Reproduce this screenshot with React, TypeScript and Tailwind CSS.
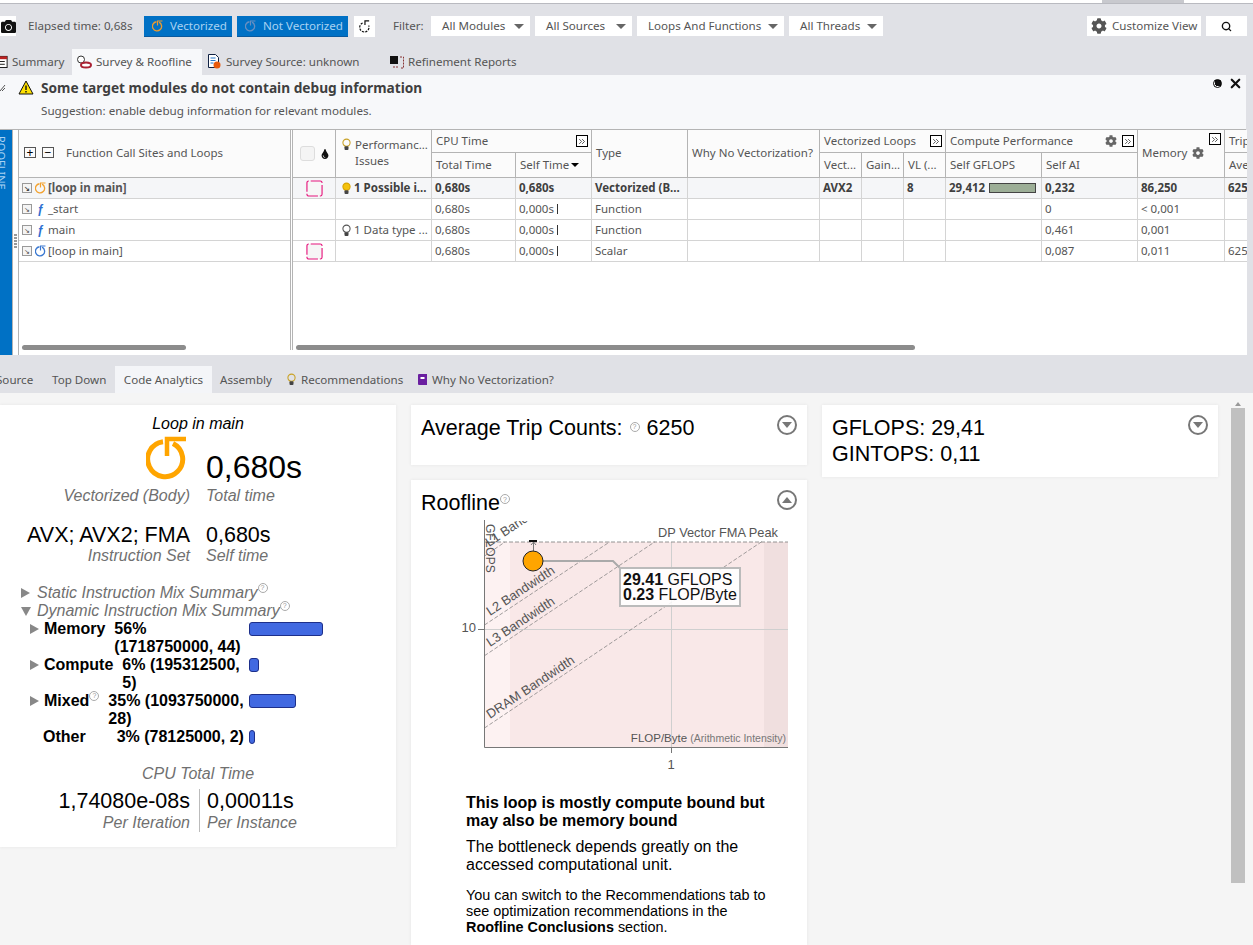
import { ChevronsRight, Search, X } from "lucide-react";
import { FaCamera, FaCog, FaTint } from "react-icons/fa";
import type { ReactNode } from "react";

const ui = "[font-family:'Noto_Sans',sans-serif]";
const arial = "[font-family:'Liberation_Sans',Arial,sans-serif]";
const cols =
  "grid grid-cols-[43px_96px_84px_76px_96px_132px_42px_42px_42px_96px_96px_87px_22px]";

function LoopIcon({ color, className }: { color: string; className: string }) {
  return (
    <svg viewBox="0 0 42 44" className={className} fill="none">
      <path d="M27 7.5A17.5 17.5 0 1 1 17 5.8" stroke={color} strokeWidth="5" />
      <path d="M40 3H21V20" stroke={color} strokeWidth="4.5" />
    </svg>
  );
}

function Bulb({ fill = "none", stroke = "#c9a227" }: { fill?: string; stroke?: string }) {
  return (
    <svg viewBox="0 0 10 14" className="h-[13px] w-[9px] shrink-0">
      <circle cx="5" cy="5" r="4" fill={fill} stroke={stroke} strokeWidth="1.2" />
      <rect x="2.8" y="9" width="4.4" height="4" rx="1" fill="#444" />
    </svg>
  );
}

function Help({ className = "" }: { className?: string }) {
  return (
    <span
      className={`inline-flex h-[10px] w-[10px] items-center justify-center rounded-full border border-[#aaa] text-[7px] leading-none font-normal not-italic text-[#999] ${className}`}
    >
      ?
    </span>
  );
}

function Expand() {
  return (
    <span className="flex h-[12px] w-[12px] items-center justify-center border border-black bg-white">
      <ChevronsRight size={11} strokeWidth={1.8} color="#222" />
    </span>
  );
}

function Drop({ label, className }: { label: string; className: string }) {
  return (
    <div className={`flex h-[20px] items-center justify-between bg-white pr-[6px] pl-[11px] ${className}`}>
      <span>{label}</span>
      <span className="h-0 w-0 border-x-[5px] border-t-[5px] border-x-transparent border-t-[#666]" />
    </div>
  );
}

function Toolbar() {
  return (
    <div className="flex h-[45px] items-start pt-[12px] text-[11.6px] text-[#555]">
      <div className="flex h-[20px] w-[16px] items-center justify-end overflow-hidden bg-white">
        <FaCamera size={15} color="#111" className="shrink-0" />
      </div>
      <span className="ml-[12px] w-[116px] leading-[20px]">Elapsed time: 0,68s</span>
      <div className="flex h-[21px] w-[88px] items-center gap-[7px] border-b border-[#0a5a9e] bg-[#0071c5] pl-[8px] text-[#a9d2f2]">
        <LoopIcon color="#eb9b2e" className="h-[12px] w-[11px]" />
        Vectorized
      </div>
      <div className="ml-[5px] flex h-[21px] w-[111px] items-center gap-[7px] border-b border-[#0a5a9e] bg-[#0071c5] pl-[8px] text-[#a9d2f2]">
        <LoopIcon color="#6a8fc0" className="h-[12px] w-[11px]" />
        Not Vectorized
      </div>
      <div className="ml-[6px] flex h-[21px] w-[21px] items-center justify-center bg-white">
        <svg viewBox="0 0 14 14" className="h-[13px] w-[13px]" fill="none" stroke="#111" strokeWidth="1.3">
          <path d="M5 3.2A5 5 0 1 0 11.5 6" strokeDasharray="2.4 1.2" />
          <path d="M12 1H7.5V5.5" />
        </svg>
      </div>
      <span className="ml-[18px] w-[38px] leading-[20px]">Filter:</span>
      <Drop label="All Modules" className="w-[99px]" />
      <Drop label="All Sources" className="ml-[5px] w-[97px]" />
      <Drop label="Loops And Functions" className="ml-[5px] w-[147px]" />
      <Drop label="All Threads" className="ml-[5px] w-[94px]" />
      <div className="ml-[204px] flex h-[20px] w-[114px] items-center gap-[5px] bg-white pl-[4px]">
        <FaCog size={16} color="#555" />
        Customize View
      </div>
      <div className="ml-[5px] flex h-[20px] w-[41px] items-center justify-center bg-white">
        <Search size={11} color="#111" strokeWidth={3} />
      </div>
    </div>
  );
}

function TopTabs() {
  return (
    <div className="flex h-[26px] items-center text-[11.6px] text-[#555]">
      <div className="-ml-[4px] flex w-[76px] items-center gap-[4px]">
        <svg viewBox="0 0 12 14" className="h-[13px] w-[12px]">
          <rect x="0.5" y="1.5" width="11" height="12" fill="#fff" stroke="#111" />
          <rect x="0.5" y="1.5" width="11" height="3" fill="#b22" />
          <path d="M3 7h6M3 10h6" stroke="#111" />
        </svg>
        Summary
      </div>
      <div className="flex h-[26px] w-[130px] items-center gap-[4px] bg-[#f7f8fa] pl-[4px]">
        <svg viewBox="0 0 16 14" className="h-[14px] w-[16px]">
          <circle cx="5" cy="4.5" r="3.5" fill="#fff" stroke="#333" />
          <ellipse cx="10" cy="10" rx="5" ry="2.5" fill="#fff" stroke="#a23" strokeWidth="2" />
        </svg>
        Survey &amp; Roofline
      </div>
      <div className="ml-[6px] flex w-[182px] items-center gap-[5px]">
        <svg viewBox="0 0 13 15" className="h-[15px] w-[13px]">
          <path d="M.5.5h7l3 3v10H.5z" fill="#fff" stroke="#124" />
          <path d="M2.5 4h5M2.5 6.5h5M2.5 9h3" stroke="#27c" />
          <circle cx="9" cy="11" r="3.5" fill="#e8590c" />
        </svg>
        Survey Source: unknown
      </div>
      <div className="flex items-center gap-[4px]">
        <svg viewBox="0 0 14 14" className="h-[14px] w-[14px]">
          <rect x="0" y="1" width="8" height="8" fill="#111" />
          <path d="M10 2h3.5v11H10M3 12h5" fill="none" stroke="#833" strokeDasharray="2 1" />
        </svg>
        Refinement Reports
      </div>
    </div>
  );
}

function Notice() {
  return (
    <div className="flex h-[54px] bg-[#f7f8fa] text-[#444]">
      <svg viewBox="0 0 6 8" className="mt-[9px] h-[8px] w-[6px] shrink-0">
        <path d="M0 7 5 1M2 7l3-3" stroke="#555" />
      </svg>
      <svg viewBox="0 0 16 15" className="mt-[5px] ml-[12px] h-[15px] w-[16px] shrink-0">
        <path d="M8 1 15 14H1z" fill="#ffe100" stroke="#111" strokeLinejoin="round" />
        <path d="M8 5.5v4.5M8 11v1.5" stroke="#111" strokeWidth="1.4" />
      </svg>
      <div className="ml-[7px] grow">
        <div className="mt-[3px] text-[13.7px] leading-[20px] font-bold text-[#3f3f3f]">
          Some target modules do not contain debug information
        </div>
        <div className="mt-[5px] text-[11.65px] leading-[16px] text-[#555]">
          Suggestion: enable debug information for relevant modules.
        </div>
      </div>
      <div className="mt-[1px] mr-[3px] flex h-[15px] items-center gap-[6px]">
        <span className="h-[9px] w-[9px] rounded-full border border-black bg-[radial-gradient(circle_at_65%_35%,#111_60%,#fff_62%)]" />
        <X size={15} strokeWidth={3.5} color="#111" />
      </div>
    </div>
  );
}

function Cell({ children, className = "" }: { children?: ReactNode; className?: string }) {
  return (
    <div className={`flex items-center overflow-hidden border-r border-[#d4d4d4] pl-[3px] whitespace-nowrap ${className}`}>
      {children}
    </div>
  );
}

function Head({ children, className = "" }: { children?: ReactNode; className?: string }) {
  return (
    <div className={`relative flex items-center overflow-hidden border-r border-[#b4b4b4] pl-[4px] whitespace-nowrap ${className}`}>
      {children}
    </div>
  );
}

function Marked() {
  return (
    <svg viewBox="0 0 18 18" className="h-[17px] w-[17px]">
      <rect x="1" y="1" width="16" height="16" rx="2" fill="#f6f6f6" stroke="#e6147c" strokeWidth="1.2" strokeDasharray="13 2" strokeDashoffset="-2" />
    </svg>
  );
}

function Micro({ children }: { children: ReactNode }) {
  return <span className="flex items-center gap-[2px]">{children}<span className="ml-[1px] h-[10px] w-px bg-[#333]" /></span>;
}

const treeRows = [
  { kind: "loop", color: "#f2a12e", name: "[loop in main]", bold: true },
  { kind: "fn", name: "_start" },
  { kind: "fn", name: "main" },
  { kind: "loop", color: "#3a78d0", name: "[loop in main]" },
];

function Tree() {
  return (
    <div className="flex w-[272px] shrink-0 flex-col border-r border-[#b4b4b4] bg-white">
      <div className="flex h-[48px] items-center border-b border-[#b4b4b4] bg-[#fbfbfb] pb-[2px] pl-[5px] text-[11.5px] text-[#555]">
        <span className="flex h-[11px] w-[12px] items-center justify-center border border-[#555] text-[12px] leading-none text-black">+</span>
        <span className="ml-[6px] flex h-[11px] w-[12px] items-center justify-center border border-[#555] text-[12px] leading-none text-black">−</span>
        <span className="ml-[12px]">Function Call Sites and Loops</span>
      </div>
      {treeRows.map((row, index) => (
        <div
          key={index}
          className={`flex h-[21px] items-center border-b border-[#d4d4d4] pl-[3px] text-[11.5px] text-[#555] ${row.bold ? "bg-[#f5f6f8] font-bold text-[#3f3f3f]" : ""}`}
        >
          <span className="flex h-[10px] w-[10px] items-center justify-center border border-[#999] bg-[#f4f4f4] text-[7px] leading-none text-[#444]">↘</span>
          <span className="ml-[1px] flex w-[15px] justify-center">
            {row.kind === "loop" ? (
              <LoopIcon color={row.color as string} className="h-[12px] w-[11px]" />
            ) : (
              <span className="text-[12px] leading-none font-bold text-[#2f6fd0] [font-family:'Liberation_Sans',sans-serif]">ƒ</span>
            )}
          </span>
          <span>{row.name}</span>
        </div>
      ))}
    </div>
  );
}

function GridHeader() {
  return (
    <div className={`${cols} h-[48px] grid-rows-[23px_24px] border-b border-[#b4b4b4] bg-[#fbfbfb]`}>
      <Head className="row-span-2 !pl-[7px]">
        <span className="h-[15px] w-[15px] rounded-[3px] border border-[#ddd] bg-[#f4f4f4]" />
        <FaTint size={10} color="#111" className="ml-[5px]" />
      </Head>
      <Head className="row-span-2 items-start !pl-[6px]">
        <div className="mt-[3px] flex flex-col">
          <div className="flex h-[23px] items-center gap-[4px]"><Bulb />Performanc...</div>
          <div className="ml-[13px] leading-[10px]">Issues</div>
        </div>
      </Head>
      <Head className="col-span-2 justify-between border-b pr-[3px]">CPU Time<Expand /></Head>
      <Head className="row-span-2 pb-[2px]">Type</Head>
      <Head className="row-span-2 pb-[2px]">Why No Vectorization?</Head>
      <Head className="col-span-3 justify-between border-b pr-[3px]">Vectorized Loops<Expand /></Head>
      <Head className="col-span-2 justify-between border-b pr-[3px]">
        Compute Performance
        <span className="flex items-center gap-[5px]"><FaCog size={12} color="#666" /><Expand /></span>
      </Head>
      <Head className="row-span-2 gap-[5px] pb-[2px]">
        Memory <FaCog size={12} color="#666" />
        <span className="absolute top-[3px] right-[3px]"><Expand /></span>
      </Head>
      <div className="border-b border-[#b4b4b4] pl-[4px] leading-[22px]">Trip</div>
      <Head>Total Time</Head>
      <Head>
        Self Time
        <span className="ml-[2px] h-0 w-0 border-x-[4px] border-t-[4px] border-x-transparent border-t-black" />
      </Head>
      <Head>Vect...</Head>
      <Head>Gain...</Head>
      <Head>VL (...</Head>
      <Head>Self GFLOPS</Head>
      <Head>Self AI</Head>
      <div className="pl-[4px] leading-[24px]">Ave</div>
    </div>
  );
}

function GridRows() {
  return (
    <>
      <div className={`${cols} h-[21px] border-b border-[#d4d4d4] bg-[#f5f6f8] font-bold text-[#3f3f3f]`}>
        <Cell className="justify-center !pl-0"><Marked /></Cell>
        <Cell className="gap-[3px] !pl-[6px]"><Bulb fill="#f4c20d" stroke="#d9a400" />1 Possible i...</Cell>
        <Cell>0,680s</Cell>
        <Cell>0,680s</Cell>
        <Cell>Vectorized (B...</Cell>
        <Cell />
        <Cell>AVX2</Cell>
        <Cell />
        <Cell>8</Cell>
        <Cell className="gap-[4px]">
          29,412
          <span className="h-[10px] w-[47px] border border-[#444] bg-[#9cae97]" />
        </Cell>
        <Cell>0,232</Cell>
        <Cell>86,250</Cell>
        <div className="pl-[3px] leading-[20px]">625</div>
      </div>
      <div className={`${cols} h-[21px] border-b border-[#d4d4d4]`}>
        <Cell />
        <Cell />
        <Cell>0,680s</Cell>
        <Cell><Micro>0,000s</Micro></Cell>
        <Cell>Function</Cell>
        <Cell />
        <Cell />
        <Cell />
        <Cell />
        <Cell />
        <Cell>0</Cell>
        <Cell>&lt; 0,001</Cell>
        <div />
      </div>
      <div className={`${cols} h-[21px] border-b border-[#d4d4d4]`}>
        <Cell />
        <Cell className="gap-[3px] !pl-[6px]"><Bulb stroke="#555" />1 Data type ...</Cell>
        <Cell>0,680s</Cell>
        <Cell><Micro>0,000s</Micro></Cell>
        <Cell>Function</Cell>
        <Cell />
        <Cell />
        <Cell />
        <Cell />
        <Cell />
        <Cell>0,461</Cell>
        <Cell>0,001</Cell>
        <div />
      </div>
      <div className={`${cols} h-[21px] border-b border-[#d4d4d4]`}>
        <Cell className="justify-center !pl-0"><Marked /></Cell>
        <Cell />
        <Cell>0,680s</Cell>
        <Cell><Micro>0,000s</Micro></Cell>
        <Cell>Scalar</Cell>
        <Cell />
        <Cell />
        <Cell />
        <Cell />
        <Cell />
        <Cell>0,087</Cell>
        <Cell>0,011</Cell>
        <div className="pl-[3px] leading-[20px]">625</div>
      </div>
    </>
  );
}

function SurveyPane() {
  return (
    <div className="flex h-[226px] w-[1246px] border-t border-[#b4b4b4] text-[11.5px] text-[#555]">
      <div className="flex w-[12px] shrink-0 justify-center overflow-hidden bg-[#0071c5]">
        <span className="-ml-[10px] pt-[6px] text-[11px] leading-none text-[#a9d2f2] [writing-mode:vertical-rl]">ROOFLINE</span>
      </div>
      <div className="flex w-[6px] shrink-0 flex-col items-center border-l border-[#b4b4b4] bg-white pt-[104px] pr-[1px]">
        <span className="h-[15px] w-[3px] bg-[repeating-linear-gradient(#999_0_2px,#fff_2px_3px)]" />
      </div>
      <div className="flex grow flex-col border-l border-[#b4b4b4]">
        <div className="flex grow overflow-hidden">
          <Tree />
          <div className="w-[1px] shrink-0 bg-white" />
          <div className="grow overflow-hidden border-l border-[#b4b4b4] bg-white">
            <GridHeader />
            <GridRows />
          </div>
        </div>
        <div className="flex h-[10px] items-start bg-white">
          <div className="flex w-[272px] shrink-0 border-r border-[#b4b4b4] pl-[3px]">
            <span className="h-[5px] w-[164px] rounded-full bg-[#8c8c8c]" />
          </div>
          <div className="ml-[1px] border-l border-[#b4b4b4] pl-[3px]">
            <span className="block h-[5px] w-[619px] rounded-full bg-[#8c8c8c]" />
          </div>
        </div>
      </div>
    </div>
  );
}

function LowerTabs() {
  return (
    <div className="mt-[11px] flex h-[27px] items-center text-[11.6px] text-[#555]">
      <span className="-ml-[4px] w-[56px]">Source</span>
      <span className="w-[63px]">Top Down</span>
      <span className="flex h-[27px] w-[97px] items-center justify-center bg-[#f4f5f8]">Code Analytics</span>
      <span className="ml-[8px] w-[67px]">Assembly</span>
      <span className="flex w-[131px] items-center gap-[5px]"><Bulb />Recommendations</span>
      <span className="flex items-center gap-[5px]">
        <svg viewBox="0 0 9 11" className="h-[11px] w-[9px]">
          <path d="M1 0h8v11H1a1 1 0 0 1-1-1V1a1 1 0 0 1 1-1z" fill="#6a1fa0" />
          <rect x="2.5" y="3" width="4" height="2" fill="#fff" />
        </svg>
        Why No Vectorization?
      </span>
    </div>
  );
}

const mix = [
  { name: "Memory", value: "56% (1718750000, 44)", bar: "w-[74px]", gap: "ml-[9px]", arrow: true },
  { name: "Compute", value: "6% (195312500, 5)", bar: "w-[10px]", gap: "ml-[9px]", arrow: true },
  { name: "Mixed", value: "35% (1093750000, 28)", bar: "w-[47px]", gap: "ml-[9px]", help: true, arrow: true },
  { name: "Other", value: "3% (78125000, 2)", bar: "w-[6px]", gap: "ml-[31px] whitespace-nowrap", arrow: false },
];

function SummaryCard() {
  return (
    <div className={`h-[442px] w-[396px] shrink-0 bg-white pt-[9px] shadow-[0_0_3px_#e4e4e4] ${arial}`}>
      <div className="text-center text-[16px] leading-[19px] text-black italic">Loop in main</div>
      <div className="mt-[3px] grid grid-cols-[190px_1fr] gap-x-[16px]">
        <div className="flex h-[44px] items-start pl-[146px]">
          <LoopIcon color="#ffa500" className="h-[44px] w-[42px]" />
        </div>
        <div className="mt-[13px] h-[36px] text-[32px] leading-[36px] text-black">0,680s</div>
        <div className="mt-[1px] text-right text-[16px] leading-[19px] text-[#707070] italic">Vectorized (Body)</div>
        <div className="mt-[1px] text-[16px] leading-[19px] text-[#707070] italic">Total time</div>
        <div className="mt-[18px] text-right text-[21.5px] leading-[25px] text-black">AVX; AVX2; FMA</div>
        <div className="mt-[18px] text-[21.5px] leading-[25px] text-black">0,680s</div>
        <div className="-mt-[2px] text-right text-[16px] leading-[19px] text-[#707070] italic">Instruction Set</div>
        <div className="-mt-[2px] text-[16px] leading-[19px] text-[#707070] italic">Self time</div>
      </div>
      <div className="mt-[19px] pl-[21px] text-[16px] leading-[18px] text-[#707070] italic">
        <div className="flex items-center gap-[7px]">
          <span className="h-0 w-0 border-y-[5px] border-l-[9px] border-y-transparent border-l-[#888]" />
          <span>Static Instruction Mix Summary<Help className="relative -top-[8px]" /></span>
        </div>
        <div className="flex items-center gap-[6px]">
          <span className="h-0 w-0 border-x-[5px] border-t-[9px] border-x-transparent border-t-[#888]" />
          <span>Dynamic Instruction Mix Summary<Help className="relative -top-[8px]" /></span>
        </div>
      </div>
      <div className="pl-[30px] text-[16px] leading-[18px] font-bold text-black">
        {mix.map((row) => (
          <div key={row.name} className="flex items-start">
            <span className="w-[14px] shrink-0 pt-[4px]">
              {row.arrow && <span className="block h-0 w-0 border-y-[5px] border-l-[9px] border-y-transparent border-l-[#888]" />}
            </span>
            <span className={`shrink-0 ${row.arrow ? "" : "-ml-px"}`}>
              {row.name}
              {row.help && <Help className="relative -top-[8px]" />}
            </span>
            <span className={`${row.gap} grow`}>{row.value}</span>
            <span className="mt-[2px] mr-[73px] ml-[4px] flex w-[74px] shrink-0">
              <span className={`h-[14px] ${row.bar} rounded-[3px] border border-[#1d2f8a] bg-[#4169e1]`} />
            </span>
          </div>
        ))}
      </div>
      <div className="mt-[18px] text-center text-[16px] leading-[19px] text-[#707070] italic">CPU Total Time</div>
      <div className="mt-[6px] flex">
        <div className="w-[199px] pr-[9px] text-right">
          <div className="text-[21.5px] leading-[25px] text-black">1,74080e-08s</div>
          <div className="-mt-[1px] text-[16px] leading-[19px] text-[#707070] italic">Per Iteration</div>
        </div>
        <div className="border-l border-[#bbb] pl-[7px]">
          <div className="text-[21.5px] leading-[25px] text-black">0,00011s</div>
          <div className="-mt-[1px] text-[16px] leading-[19px] text-[#707070] italic">Per Instance</div>
        </div>
      </div>
    </div>
  );
}

function Toggle({ up = false }: { up?: boolean }) {
  return (
    <span className="flex h-[20px] w-[20px] items-center justify-center rounded-full border-2 border-[#777] bg-white">
      <span
        className={`h-0 w-0 border-x-[5px] border-x-transparent ${up ? "border-b-[6px] border-b-[#777]" : "border-t-[6px] border-t-[#777]"}`}
      />
    </span>
  );
}

function RooflineChart() {
  const label = "Liberation Sans, Arial, sans-serif";
  return (
    <svg width="396" height="290" viewBox="411 510 396 290" fontFamily={label} className="block">
      <defs>
        <clipPath id="plot">
          <rect x="485" y="521" width="303" height="226" />
        </clipPath>
      </defs>
      <rect x="485" y="542" width="25" height="205" fill="#fdf2f2" />
      <rect x="510" y="542" width="254" height="205" fill="#f9e8e8" />
      <rect x="764" y="542" width="24" height="205" fill="#f0dfdf" />
      <path d="M671.5 542V747M485 629.5H788" stroke="#cfcfcf" />
      <g clipPath="url(#plot)" stroke="#777" strokeDasharray="4 2" strokeWidth="0.7" fill="none">
        <path d="M485 542H788" stroke="#888" strokeWidth="0.9" />
        <path d="M484.5 556 505 542" />
        <path d="M484.5 625 610 541.7" />
        <path d="M484.5 655.7 655 541.7" />
        <path d="M484.5 728 761.7 541.7" />
      </g>
      <g clipPath="url(#plot)" fontSize="13" fill="#555">
        <text transform="translate(489 547) rotate(-33.5)">L1 Bandwidth</text>
        <text transform="translate(490 616) rotate(-33.5)">L2 Bandwidth</text>
        <text transform="translate(490 647) rotate(-33.5)">L3 Bandwidth</text>
        <text transform="translate(490 719) rotate(-33.5)">DRAM Bandwidth</text>
      </g>
      <text transform="translate(486 524) rotate(90)" fontSize="12" fill="#555">GFLOPS</text>
      <text x="778" y="537" textAnchor="end" fontSize="12.8" fill="#555">DP Vector FMA Peak</text>
      <text x="786" y="742" textAnchor="end" fontSize="11.5" fill="#555">
        FLOP/Byte <tspan fill="#777" fontSize="10.5">(Arithmetic Intensity)</tspan>
      </text>
      <path d="M484.5 520V747.5H788M478 629.5H485M671.5 747V753" fill="none" stroke="#777" />
      <text x="476" y="632" textAnchor="end" fontSize="13" fill="#555">10</text>
      <text x="671" y="769" textAnchor="middle" fontSize="13" fill="#555">1</text>
      <path d="M533.5 551V542M531 545l2.5-3 2.5 3" fill="none" stroke="#777" />
      <path d="M529 541H537" stroke="#111" strokeWidth="2" />
      <path d="M543 561H613L620 568" fill="none" stroke="#aaa" strokeWidth="2" />
      <circle cx="533" cy="561" r="10" fill="#ffa500" stroke="#222" />
      <rect x="620" y="568" width="120" height="38" fill="#fff" fillOpacity="0.88" stroke="#bbb" strokeWidth="2" />
      <text x="623" y="585" fontSize="16" fill="#111">
        <tspan fontWeight="bold">29.41</tspan> GFLOPS
      </text>
      <text x="623" y="600" fontSize="16" fill="#111">
        <tspan fontWeight="bold">0.23</tspan> FLOP/Byte
      </text>
    </svg>
  );
}

function MiddleColumn() {
  return (
    <div className={`flex w-[396px] shrink-0 flex-col gap-[15px] ${arial}`}>
      <div className="flex h-[60px] justify-between bg-white pt-[10px] pr-[10px] pl-[10px] shadow-[0_0_3px_#e4e4e4]">
        <div className="text-[21.5px] leading-[26px] text-black">
          Average Trip Counts: <Help className="relative -top-[6px] mx-[1px]" /> 6250
        </div>
        <Toggle />
      </div>
      <div className="h-[470px] bg-white shadow-[0_0_3px_#e4e4e4]">
        <div className="flex h-[30px] justify-between pt-[10px] pr-[10px] pl-[10px]">
          <div className="text-[21.5px] leading-[26px] text-black">
            Roofline<Help className="relative -top-[8px]" />
          </div>
          <Toggle up />
        </div>
        <RooflineChart />
        <div className="ml-[55px] w-[310px] text-black">
          <div className="-mt-[6px] text-[16px] leading-[18px] font-bold">
            This loop is mostly compute bound but may also be memory bound
          </div>
          <div className="mt-[8px] text-[16px] leading-[18px]">
            The bottleneck depends greatly on the accessed computational unit.
          </div>
          <div className="mt-[13px] text-[14.4px] leading-[16px]">
            You can switch to the Recommendations tab to see optimization recommendations in the{" "}
            <span className="font-bold">Roofline Conclusions</span> section.
          </div>
        </div>
      </div>
    </div>
  );
}

function MetricsCard() {
  return (
    <div className={`flex h-[72px] w-[396px] shrink-0 justify-between bg-white pt-[10px] pr-[10px] pl-[10px] text-[21.5px] leading-[26px] text-black shadow-[0_0_3px_#e4e4e4] ${arial}`}>
      <div>
        <div>GFLOPS: 29,41</div>
        <div>GINTOPS: 0,11</div>
      </div>
      <Toggle />
    </div>
  );
}

export default function App() {
  return (
    <div className={`h-[945px] w-[1253px] overflow-hidden bg-[#e0e1e6] ${ui}`}>
      <div className="flex h-[4px] border-b border-[#b9bac0] bg-white">
        <span className="ml-[1102px] w-[82px] bg-[#c8c9ce]" />
      </div>
      <Toolbar />
      <TopTabs />
      <div className="w-[1246px]">
        <Notice />
      </div>
      <SurveyPane />
      <LowerTabs />
      <div className="flex h-[552px] gap-[15px] bg-[#f5f5f5] pt-[12px]">
        <SummaryCard />
        <MiddleColumn />
        <MetricsCard />
        <div className="-mt-[3px] -ml-[2px] flex w-[14px] shrink-0 flex-col items-center">
          <span className="h-0 w-0 border-x-[3px] border-b-[4px] border-x-transparent border-b-[#999]" />
          <span className="mt-[2px] h-[475px] w-[14px] bg-[#c0c0c0]" />
        </div>
      </div>
    </div>
  );
}
